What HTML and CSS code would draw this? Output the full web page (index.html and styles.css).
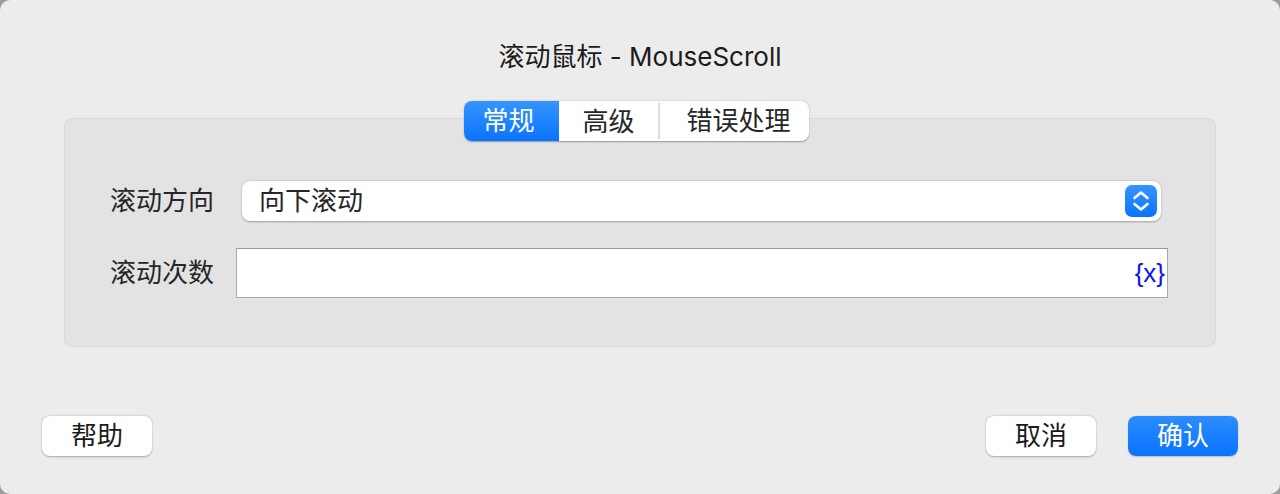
FILE: index.html
```html
<!DOCTYPE html>
<html lang="zh-CN">
<head>
<meta charset="utf-8">
<title>滚动鼠标 - MouseScroll</title>
<link rel="stylesheet" href="styles.css">
</head>
<body>
<div class="window">
  <div class="title">滚动鼠标 - MouseScroll</div>
  <div class="tabs">
    <div class="seg seg-active">常规</div>
    <div class="seg seg-mid">高级</div>
    <div class="seg seg-last">错误处理</div>
  </div>
  <div class="panel">
    <div class="form">
      <div class="label">滚动方向</div>
      <div class="select">
        <span class="select-text">向下滚动</span>
        <span class="stepper">
          <svg width="32" height="32" viewBox="0 0 32 32"><path d="M9.5 13 L16 7.5 L22.5 13 M9.5 19 L16 24.5 L22.5 19" fill="none" stroke="#fff" stroke-width="2.6" stroke-linecap="round" stroke-linejoin="round"/></svg>
        </span>
      </div>
      <div class="label">滚动次数</div>
      <div class="field"><span class="var">{x}</span></div>
    </div>
  </div>
  <div class="footer">
    <div class="btn">帮助</div>
    <div class="spacer"></div>
    <div class="btn">取消</div>
    <div class="btn btn-primary">确认</div>
  </div>
</div>
</body>
</html>
```
FILE: styles.css
```css
html, body {
  margin: 0;
  padding: 0;
  background: #9c9c9c;
}
body {
  width: 1280px;
  height: 494px;
  overflow: hidden;
  font-family: Inter, "Noto Sans CJK SC", sans-serif;
  color: #1e1e1e;
}
.window {
  width: 1280px;
  height: 494px;
  background: #ececec;
  border-radius: 10px;
  display: flex;
  flex-direction: column;
  box-sizing: border-box;
}
.title {
  padding-top: 40px;
  height: 34px;
  line-height: 34px;
  font-size: 26px;
  text-align: center;
  color: #1b1b1b;
}
.tabs {
  position: relative;
  z-index: 2;
  align-self: center;
  margin-top: 27px;
  margin-right: 7px;
  display: flex;
  height: 40px;
  background: #fff;
  border-radius: 8px;
  box-shadow: 0 0.5px 1.5px rgba(0,0,0,0.35);
  font-size: 26px;
  color: #262626;
}
.seg {
  display: flex;
  align-items: center;
  justify-content: center;
  height: 40px;
  box-sizing: border-box;
  padding-bottom: 5px;
}
.seg-active {
  width: 95px;
  padding-right: 6px;
  color: #fff;
  border-radius: 8px 0 0 8px;
  background: linear-gradient(#3595ff, #0a73ff);
}
.seg-mid {
  width: 101px;
  border-right: 2px solid #dcdcdc;
  height: 36px;
  margin-top: 2px;
  padding-bottom: 3px;
}
.seg-last {
  width: 149px;
  padding-left: 8px;
}
.panel {
  margin: -23px 64px 0 64px;
  height: 229px;
  box-sizing: border-box;
  background: #e3e3e3;
  border: 1px solid #d9d9d9;
  border-radius: 8px;
  padding: 62px 47px 0 45px;
}
.form {
  display: grid;
  grid-template-columns: 126px 1fr;
  grid-template-rows: 40px 50px;
  row-gap: 27px;
  align-items: center;
}
.label {
  font-size: 26px;
  color: #262626;
  line-height: 40px;
}
.select {
  margin: 0 7px 0 6px;
  height: 40px;
  box-sizing: border-box;
  background: #fff;
  border-radius: 8px;
  box-shadow: 0 0.5px 2px rgba(0,0,0,0.3);
  display: flex;
  align-items: center;
  padding: 0 4px 0 17px;
  font-size: 26px;
  color: #262626;
}
.select-text {
  flex: 1;
  position: relative;
  top: -3px;
}
.stepper {
  width: 32px;
  height: 32px;
  border-radius: 7px;
  background: linear-gradient(#3595ff, #0a73ff);
  display: flex;
}
.field {
  height: 50px;
  box-sizing: border-box;
  background: #fff;
  border: 1px solid #a9a9a9;
  border-top-color: #999;
  display: flex;
  align-items: center;
  justify-content: flex-end;
  padding-right: 2px;
}
.var {
  font-family: "Liberation Sans", sans-serif;
  font-size: 26px;
  color: #1010f0;
}
.footer {
  display: flex;
  align-items: center;
  margin-top: 69px;
  padding: 0 42px;
  gap: 32px;
}
.spacer {
  flex: 1;
}
.btn {
  width: 110px;
  height: 40px;
  box-sizing: border-box;
  padding-bottom: 5px;
  border-radius: 8px;
  background: #fff;
  box-shadow: 0 0.5px 2px rgba(0,0,0,0.3);
  display: flex;
  align-items: center;
  justify-content: center;
  font-size: 26px;
  color: #1a1a1a;
}
.btn-primary {
  color: #fff;
  background: linear-gradient(#2b8dff, #0a72ff);
  box-shadow: 0 0.5px 1.5px rgba(0,0,0,0.2);
}
```
